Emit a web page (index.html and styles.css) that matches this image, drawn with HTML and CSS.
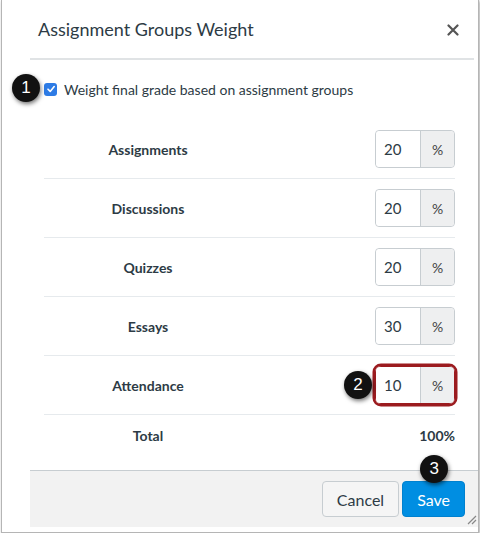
FILE: index.html
```html
<!DOCTYPE html>
<html lang="en">
<head>
    <meta charset="UTF-8">
    <meta name="viewport" content="width=device-width, initial-scale=1.0">
    <title>Assignment Groups Weight</title>
    <link rel="stylesheet" href="styles.css">
</head>
<body>
    <div class="frame">
        <div class="dialog">
            <div class="dialog-header">
                <span class="dialog-title">Assignment Groups Weight</span>
                <svg class="close-icon" width="12" height="12" viewBox="0 0 12 12">
                    <path d="M1.5 1.5 L10.5 10.5 M10.5 1.5 L1.5 10.5" stroke="#555" stroke-width="2.2" stroke-linecap="round"/>
                </svg>
            </div>

            <div class="dialog-body">
                <label class="weight-check">
                    <span class="badge badge-one">1</span>
                    <span class="checkbox">
                        <svg width="10" height="10" viewBox="0 0 10 10">
                            <path d="M2 5.2 L4.2 7.4 L8.2 2.6" fill="none" stroke="#fff" stroke-width="1.6" stroke-linecap="round" stroke-linejoin="round"/>
                        </svg>
                    </span>
                    Weight final grade based on assignment groups
                </label>

                <div class="groups">
                    <div class="group-row">
                        <span class="group-name">Assignments</span>
                        <div class="input-group"><span class="value">20</span><span class="addon">%</span></div>
                    </div>
                    <div class="group-row">
                        <span class="group-name">Discussions</span>
                        <div class="input-group"><span class="value">20</span><span class="addon">%</span></div>
                    </div>
                    <div class="group-row">
                        <span class="group-name">Quizzes</span>
                        <div class="input-group"><span class="value">20</span><span class="addon">%</span></div>
                    </div>
                    <div class="group-row">
                        <span class="group-name">Essays</span>
                        <div class="input-group"><span class="value">30</span><span class="addon">%</span></div>
                    </div>
                    <div class="group-row">
                        <span class="group-name">Attendance</span>
                        <div class="input-group highlight">
                            <span class="badge badge-two">2</span>
                            <span class="value">10</span><span class="addon">%</span>
                        </div>
                    </div>
                    <div class="group-row total-row">
                        <span class="group-name">Total</span>
                        <span class="total-value">100%</span>
                    </div>
                </div>
            </div>

            <div class="dialog-footer">
                <button class="btn">Cancel</button>
                <button class="btn btn-primary">
                    <span class="badge badge-three">3</span>
                    Save
                </button>
                <svg class="grip" width="12" height="12" viewBox="0 0 12 12">
                    <path d="M11 3 L3 11 M11 7 L7 11" stroke="#888" stroke-width="1.2"/>
                </svg>
            </div>
        </div>
    </div>
</body>
</html>
```

FILE: styles.css
```css
body {
    margin: 0;
    background-color: white;
    font-family: Lato, "Open Sans", sans-serif;
    color: #2d3b45;
}
.frame {
    width: 476px;
    height: 532px;
    margin-left: 1px;
    border: 1px solid #b5b5b5;
    border-top: none;
    box-shadow: 1px 1px 3px rgba(0,0,0,0.35);
    background: white;
}
.dialog {
    margin-left: 28px;
    width: 448px;
    height: 527px;
    display: flex;
    flex-direction: column;
}
.dialog-header {
    height: 58px;
    display: flex;
    align-items: center;
    justify-content: space-between;
    padding: 0 15px 0 8px;
    margin-right: 4px;
    border-bottom: 2px solid #e0e3e5;
}
.dialog-title {
    font-size: 18px;
    margin-top: -1px;
}
.close-icon {
    margin-top: 2px;
}
.dialog-body {
    flex: 1;
    padding: 0 23px 0 14px;
}
.weight-check {
    position: relative;
    display: flex;
    align-items: center;
    height: 60px;
    font-size: 14px;
    gap: 7px;
    margin-top: -1px;
}
.checkbox {
    width: 13px;
    height: 13px;
    border-radius: 3px;
    background: #2d7be5;
    display: flex;
    justify-content: center;
    align-items: center;
}
.groups {
    margin-top: 1px;
}
.group-row {
    height: 58px;
    border-bottom: 1px solid #e6eaed;
    display: flex;
    align-items: center;
    justify-content: space-between;
}
.group-name {
    width: 208px;
    text-align: center;
    font-weight: bold;
    font-size: 14px;
}
.input-group {
    position: relative;
    display: flex;
    height: 36px;
    border: 1px solid #c7cdd1;
    border-radius: 4px;
    font-size: 15px;
}
.value {
    width: 44px;
    display: flex;
    align-items: center;
    padding-left: 8px;
    box-sizing: border-box;
    background: white;
    border-radius: 4px 0 0 4px;
}
.addon {
    width: 33px;
    display: flex;
    align-items: center;
    justify-content: center;
    background: #eeeff0;
    border-left: 1px solid #c7cdd1;
    border-radius: 0 4px 4px 0;
    color: #444;
    font-size: 14px;
}
.input-group.highlight {
    border-color: #9b1b1f;
    box-shadow: 0 0 0 2.5px #9b1b1f;
    border-radius: 6px;
}
.total-row {
    height: 55px;
    border-bottom: none;
    align-items: flex-start;
    padding-top: 12px;
    box-sizing: border-box;
}
.total-value {
    font-weight: bold;
    font-size: 14px;
}
.dialog-footer {
    position: relative;
    height: 56px;
    background: #f2f2f2;
    border-top: 1px solid #c7cdd1;
    display: flex;
    justify-content: flex-end;
    align-items: center;
    gap: 3px;
    padding-right: 13px;
}
.btn {
    position: relative;
    height: 36px;
    padding: 0 14px;
    font-family: Lato, sans-serif;
    font-size: 16px;
    color: #2d3b45;
    background: #f5f5f5;
    border: 1px solid #c7cdd1;
    border-radius: 4px;
}
.btn-primary {
    background: #008ee2;
    border-color: #0081cf;
    color: white;
    padding: 0 14px;
}
.grip {
    position: absolute;
    right: 1px;
    bottom: 2px;
}
.badge {
    position: absolute;
    width: 28px;
    height: 28px;
    border-radius: 50%;
    background: #111;
    color: white;
    font-family: "Liberation Sans", Arial, sans-serif;
    font-size: 17px;
    display: flex;
    justify-content: center;
    align-items: center;
    box-shadow: 1px 2px 4px rgba(0,0,0,0.55);
}
.badge-one {
    left: -32px;
    top: 15px;
}
.badge-two {
    left: -32px;
    top: 4px;
}
.badge-three {
    left: 17px;
    top: -27px;
}
```
